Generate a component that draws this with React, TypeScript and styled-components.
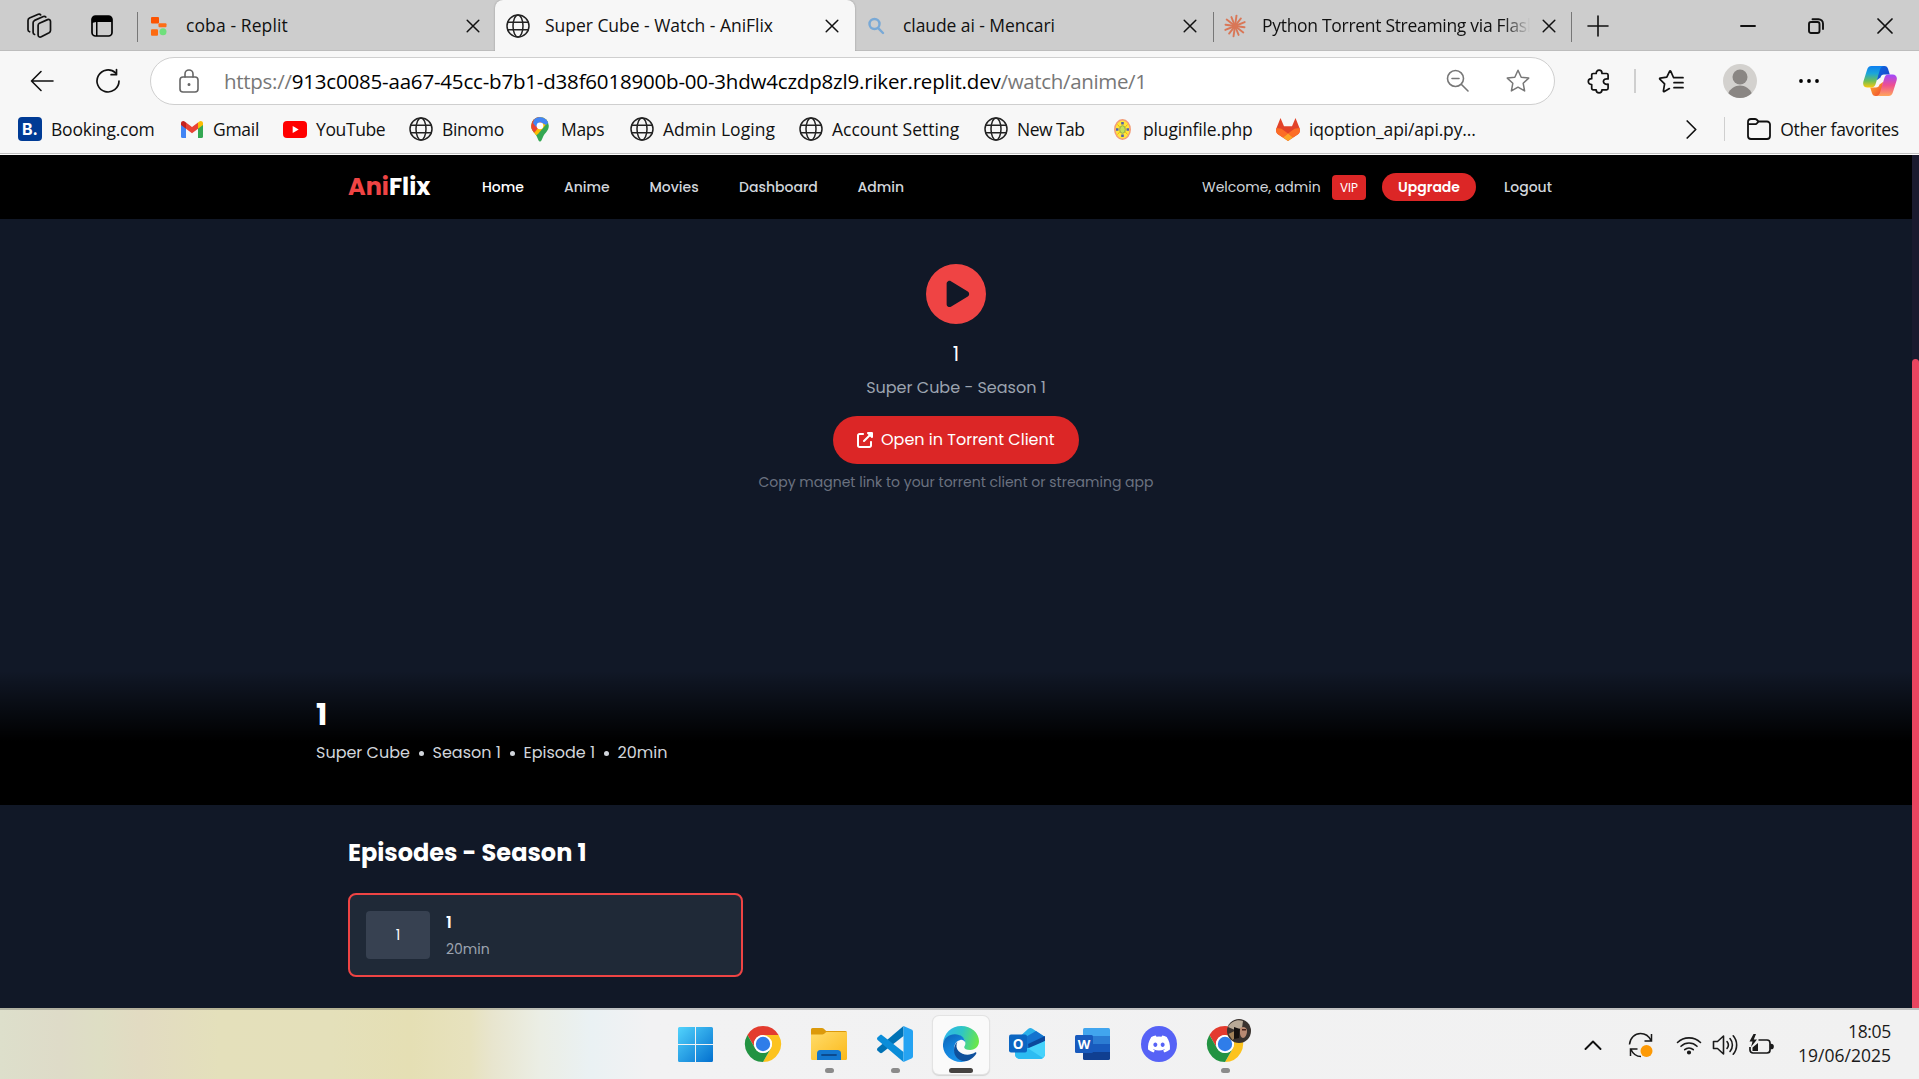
import React from "react";
import styled, { createGlobalStyle, css } from "styled-components";
import { FaCirclePlay, FaUpRightFromSquare, FaDiscord } from "react-icons/fa6";

const UI = `"Segoe UI", "Open Sans", "Noto Sans", sans-serif`;
const WEB = `Poppins, Inter, "Open Sans", sans-serif`;

const Global = createGlobalStyle`
  * { box-sizing: border-box; }
  html, body { margin: 0; padding: 0; }
  body { width: 1919px; height: 1079px; overflow: hidden; background: #111827; }
  svg { display: block; flex: none; }
`;

const Screen = styled.div`
  display: grid;
  grid-template-rows: 51px 104px 853px 71px;
  width: 1919px;
  height: 1079px;
  font-family: ${UI};
  color: #111;
`;

/* ---------- shared ---------- */
const Cell = styled.div<{ $w: number; $ml?: number }>`
  width: ${p => p.$w}px;
  margin-left: ${p => p.$ml ?? 0}px;
  height: 100%;
  display: flex;
  flex: none;
  align-items: center;
  justify-content: center;
`;
const Text = styled.span<{ $ls?: number }>`
  letter-spacing: ${p => p.$ls ?? 0}px;
  white-space: pre;
`;
const Spacer = styled.div`flex: 1;`;

/* ---------- tab strip ---------- */
const TabStrip = styled.div`
  display: flex;
  background: #cdcdcd;
  box-shadow: inset 0 -1px 0 #bdbdbd;
`;
const Lead = styled.div`
  display: flex;
  width: 136px;
  padding-left: 6px;
`;
const Tab = styled.div<{ $w: number; $active?: boolean; $sep?: boolean; $shift?: number }>`
  position: relative;
  display: flex;
  align-items: center;
  width: ${p => p.$w}px;
  flex: none;
  padding: 1px 0 0 ${p => 11 + (p.$shift ?? 0)}px;
  font-size: 17.5px;
  &::before {
    content: "";
    position: absolute;
    left: 1px;
    top: 12px;
    width: 1px;
    height: 30px;
    background: ${p => (p.$sep ? "#777" : "transparent")};
  }
  ${p => p.$active && css`
    background: #f7f7f7;
    border-radius: 8px 8px 0 0;
    box-shadow: 0 0 2px rgba(0, 0, 0, 0.3);
    clip-path: inset(0 -4px 0 -4px);
  `}
`;
const TabIcon = styled.div`
  width: 24px;
  display: flex;
  justify-content: center;
  margin-right: 15px;
`;
const TabTitle = styled.div<{ $fade?: boolean }>`
  width: 268px;
  overflow: hidden;
  white-space: pre;
  line-height: 28px;
  margin: -2px 1px 0 0;
  ${p => p.$fade && css`mask-image: linear-gradient(90deg, #000 90%, transparent 100%);`}
`;
const TabClose = styled.div`
  width: 36px;
  display: flex;
  justify-content: center;
`;
const TabEnd = styled(Tab)`
  padding: 0;
  justify-content: center;
`;

/* ---------- toolbar ---------- */
const Bars = styled.div`
  display: grid;
  grid-template-rows: 58px 44px 2px;
  background: #f7f7f7;
`;
const Toolbar = styled.div`
  display: flex;
  align-items: center;
  padding-top: 2px;
`;
const Address = styled.div`
  width: 1405px;
  height: 48px;
  margin: 0 -1px 0 9px;
  border: 1px solid #cfcfcf;
  border-radius: 24px;
  background: #fff;
  display: flex;
  align-items: center;
  font-size: 20.5px;
  line-height: 30px;
  color: #777;
`;
const Lock = styled.div`width: 73px; padding-left: 28px;`;
const Domain = styled(Text)`color: #000;`;
const Divider = styled.div<{ $ml: number; $w: number }>`
  width: ${p => p.$w}px;
  height: 24px;
  margin-left: ${p => p.$ml}px;
  background: #cfcfcf;
`;
const Bookmarks = styled.div`
  display: flex;
  align-items: center;
  padding: 0 0 4px 18px;
  font-size: 17.5px;
`;
const Bookmark = styled.div<{ $w: number }>`
  width: ${p => p.$w}px;
  flex: none;
  display: flex;
  align-items: center;
  gap: 9px;
`;
const IconBox = styled.div`
  width: 24px;
  height: 24px;
  display: flex;
  align-items: center;
  justify-content: center;
`;
const BookingMark = styled(IconBox)`
  background: #003b95;
  border-radius: 4px;
  color: #fff;
  font: 700 16px/24px Inter, sans-serif;
`;
const BarsEdge = styled.div`
  border-top: 1px solid #c2c2c2;
  background: #fff;
`;

/* ---------- page ---------- */
const Viewport = styled.div`
  display: grid;
  grid-template-columns: 1912px 7px;
  min-height: 0;
  font-family: ${WEB};
`;
const Scrollbar = styled.div`
  background: #1a1a2e;
  padding-top: 204px;
`;
const Thumb = styled.div`
  height: 100%;
  background: #e94560;
  border-radius: 4px 4px 0 0;
`;
const Page = styled.div`
  display: grid;
  grid-template-rows: 64px 586px 203px;
  background: #111827;
`;
const Nav = styled.nav`
  display: flex;
  align-items: center;
  background: #000;
  padding: 0 348px;
  font-size: 14px;
`;
const Logo = styled.div`
  width: 122px;
  font-size: 24px;
  line-height: 32px;
  font-weight: 700;
  color: #fff;
  white-space: nowrap;
`;
const LogoRed = styled.span`color: #ef4444;`;
const NavLink = styled.a<{ $w: number; $on?: boolean }>`
  width: ${p => p.$w}px;
  padding-left: 12px;
  font-weight: 500;
  color: ${p => (p.$on ? "#fff" : "#d1d5db")};
  white-space: nowrap;
`;
const Welcome = styled.span`
  width: 130px;
  color: #d1d5db;
`;
const Vip = styled.span`
  width: 34px;
  height: 25px;
  border-radius: 4px;
  background: #dc2626;
  color: #fff;
  font-size: 12px;
  line-height: 25px;
  text-align: center;
`;
const Upgrade = styled.button`
  width: 94px;
  height: 28px;
  margin: 0 16px;
  padding: 0;
  border: 0;
  border-radius: 14px;
  background: #dc2626;
  color: #fff;
  font: 600 14px/28px ${WEB};
`;
const Hero = styled.section`
  display: flex;
  flex-direction: column;
  justify-content: space-between;
`;
const Player = styled.div`
  display: flex;
  flex-direction: column;
  align-items: center;
  padding-top: 45px;
  color: #ef4444;
`;
const PlayerTitle = styled.div`
  margin-top: 16px;
  font-size: 20px;
  line-height: 28px;
  color: #fff;
`;
const PlayerSub = styled.div`
  margin-top: 8px;
  font-size: 16px;
  line-height: 24px;
  color: #9ca3af;
`;
const OpenButton = styled.button`
  display: flex;
  align-items: center;
  gap: 8px;
  width: 246px;
  height: 48px;
  margin-top: 16px;
  padding: 0 0 0 24px;
  border: 0;
  border-radius: 24px;
  background: #dc2626;
  color: #fff;
  font: 400 16px/24px ${WEB};
  white-space: nowrap;
`;
const PlayerHint = styled.div`
  margin-top: 8px;
  font-size: 14px;
  line-height: 20px;
  color: #6b7280;
`;
const Info = styled.div`
  height: 138px;
  padding: 30px 316px 0;
  background: linear-gradient(to bottom, rgba(0, 0, 0, 0) 4px, #000 74px);
`;
const InfoTitle = styled.h1`
  margin: 0;
  font-size: 30px;
  line-height: 36px;
  font-weight: 700;
  color: #fff;
`;
const Meta = styled.div`
  display: flex;
  margin-top: 8px;
  font-size: 16px;
  line-height: 24px;
  color: #d1d5db;
`;
const MetaItem = styled.span<{ $w: number }>`
  width: ${p => p.$w}px;
  white-space: nowrap;
`;
const Dot = styled.span`
  width: 22px;
  display: flex;
  align-items: center;
  justify-content: center;
  &::after {
    content: "";
    width: 5px;
    height: 5px;
    border-radius: 50%;
    background: #d1d5db;
  }
`;
const Episodes = styled.section`padding: 32px 348px 0;`;
const SectionTitle = styled.h2`
  margin: 0 0 24px;
  font-size: 24px;
  line-height: 32px;
  font-weight: 700;
  color: #fff;
`;
const EpisodeCard = styled.div`
  display: flex;
  align-items: center;
  gap: 16px;
  width: 395px;
  height: 84px;
  padding: 0 16px;
  border: 2px solid #ef4444;
  border-radius: 8px;
  background: #1f2937;
  color: #fff;
`;
const EpisodeThumb = styled.div`
  width: 64px;
  height: 48px;
  border-radius: 4px;
  background: #374151;
  font-size: 14px;
  line-height: 48px;
  text-align: center;
`;
const EpisodeName = styled.div`
  padding-top: 2px;
  font-size: 16px;
  line-height: 26px;
  font-weight: 600;
`;
const EpisodeTime = styled.div`
  font-size: 14px;
  line-height: 26px;
  color: #9ca3af;
`;

/* ---------- taskbar ---------- */
const Taskbar = styled.div`
  display: flex;
  border-top: 2px solid rgba(0, 0, 0, 0.2);
  background: linear-gradient(90deg, #dddfcb 0, #dedbc8 60px, #dedec4 100px, #e2dbc2 140px, #e4e0bb 220px, #e4e0ba 330px, #e5dfb4 410px, #e7e2be 470px, #e8e5ce 492px, #ebeee5 540px, #eaf1f3 590px, #f2f2f3 650px, #f1f1f1 100%) border-box;
`;
const Apps = styled.div`
  display: flex;
  gap: 10px;
  padding: 6px 0 0 667px;
`;
const AppButton = styled.div<{ $active?: boolean }>`
  width: 56px;
  height: 58px;
  display: grid;
  grid-template-rows: 36px 5px;
  row-gap: 6px;
  padding-top: 10px;
  justify-items: center;
  border-radius: 6px;
  &:first-child { margin-right: 2px; }
  ${p => p.$active && css`background: #fafafa; box-shadow: 0 0 0 1px #e3e3e3, 0 1px 1px 1px #d4d4d4;`}
`;
const AppIcon = styled.div`
  height: 36px;
  display: flex;
  align-items: center;
`;
const Indicator = styled.div<{ $w: number }>`
  width: ${p => p.$w}px;
  height: 5px;
  border-radius: 3px;
  background: ${p => (p.$w > 10 ? "#454341" : "#8b8b8b")};
`;
const Tray = styled.div`
  display: flex;
  align-items: center;
  padding-right: 28px;
`;
const Clock = styled.div`
  width: 106px;
  margin-top: -4px;
  text-align: right;
  font-size: 17.5px;
  line-height: 24px;
  color: #1a1a1a;
`;

/* ---------- icons ---------- */
type S = { w?: number; h?: number; vb?: string; c?: string; sw?: number; children: React.ReactNode };
const Line = ({ w = 24, h, vb, c = "#111", sw = 1.6, children }: S) => (
  <svg width={w} height={h ?? w} viewBox={vb ?? `0 0 ${w} ${h ?? w}`} fill="none" stroke={c} strokeWidth={sw} strokeLinecap="round" strokeLinejoin="round">{children}</svg>
);
const Globe = () => (
  <Line sw={1.5} c="#222"><circle cx="12" cy="12" r="11" /><ellipse cx="12" cy="12" rx="5" ry="11" /><path d="M1.8 8.2h20.4M1.8 15.8h20.4" /></Line>
);
const Cross = () => <Line w={14} sw={1.5}><path d="M1.2 1.2l11.6 11.6M12.8 1.2L1.2 12.8" /></Line>;
const Workspaces = () => (
  <Line w={26} h={26} sw={1.7}>
    <path d="M13.4 10.2l8.2-3.6c1.5-.6 2.9.2 2.9 1.8v9.2c0 1-.5 1.7-1.4 2.2l-7.8 4c-1.6.8-3.2 0-3.2-1.8v-9.6c0-1 .4-1.8 1.3-2.200z" />
    <path d="M8.600 21.500c-1-.3-1.500-1-1.500-2.100V9.800c0-1.200.5-1.900 1.500-2.400l8.800-3.900c1-.4 1.900-.1 2.400.6" />
    <path d="M3.600 18.800c-1-.3-1.600-1-1.600-2.100V7.400c0-1.200.5-1.900 1.500-2.400l8.800-3.700c1-.4 1.900-.1 2.400.6" />
  </Line>
);
const VerticalTabs = () => (
  <svg width="22" height="22" viewBox="0 0 22 22"><rect x="1" y="1" width="20" height="20" rx="3.500" fill="none" stroke="#000" strokeWidth="1.700" /><path d="M1 8V4.500A3.500 3.500 0 0 1 4.500 1h13A3.500 3.500 0 0 1 21 4.500V7H6.500v14H5V7z" fill="#000" /></svg>
);
const Replit = () => (
  <svg width="16" height="19" viewBox="0 0 16 19"><rect width="8" height="6.500" rx="1" fill="#fd5402" /><rect x="7.500" y="6.200" width="8" height="4" rx="1" fill="#fd6d16" /><rect y="12.200" width="7" height="6.500" rx="1" fill="#fd6a10" /><circle cx="12" cy="14.800" r="3.500" fill="#6fe07c" /></svg>
);
const Burst = () => (
  <Line w={24} c="#d97757" sw={1.9}>
    {Array.from({ length: 12 }, (_, i) => {
      const a = (i * 30 + 8) * Math.PI / 180, r = i % 2 ? 10.5 : 9.6;
      return <path key={i} d={`M12 12L${(12 + r * Math.cos(a)).toFixed(1)} ${(12 + r * Math.sin(a)).toFixed(1)}`} />;
    })}
  </Line>
);
const Star = ({ c = "#777" }: { c?: string }) => (
  <Line w={26} c={c} sw={1.5}><path d="M13 2.200l3.200 7 7.500.9-5.500 5.200 1.400 7.600L13 19.200l-6.600 3.700 1.400-7.600-5.500-5.200 7.500-.9z" /></Line>
);
const FavList = () => (
  <Line w={26} h={26} sw={1.7}><path d="M15.500 9.500l-2.800-6.300c-.3-.5-.8-.5-1 0L8.800 9.200l-6.600.9c-.6.1-.8.6-.4 1l4.800 4.800-1.200 6.900c-.1.7.4 1 1 .7l5-2.900M16 9.700h9M16 14.700h9M16 19.700h9" /></Line>
);
const Puzzle = () => (
  <Line w={24} h={25} sw={1.7}><path d="M8 4.500h1.200c0-2 1.200-3.300 2.900-3.300s2.900 1.300 2.900 3.300h4.500c1 0 1.600.6 1.600 1.600V10c-2.600-.5-4.700.6-4.700 2.600s2.100 3.100 4.700 2.600v4.100c0 1-.6 1.600-1.600 1.600h-4.600c0 1.800-1.100 2.900-2.800 2.900s-2.900-1.100-2.900-2.900H6.300c-1 0-1.600-.6-1.600-1.600v-3.800c-2.200 0-3.400-1.200-3.400-2.900s1.200-2.900 3.400-2.900V6.100c0-1 .6-1.600 1.600-1.600z" /></Line>
);
const Avatar = () => (
  <svg width="34" height="34" viewBox="0 0 34 34"><defs><clipPath id="av"><circle cx="17" cy="17" r="17" /></clipPath></defs><g clipPath="url(#av)"><rect width="34" height="34" fill="#d3d1ce" /><circle cx="17" cy="13" r="7.500" fill="#8a8683" /><path d="M5 30c2-5.500 7-8.500 12-8.500S27 24.500 29 30l-5 5H10z" fill="#8a8683" /></g></svg>
);
const Copilot = () => (
  <svg width="34" height="30" viewBox="0 0 34 30">
    <defs>
      <linearGradient id="cp1" x1="0" y1="0" x2="0" y2="1"><stop offset="0" stopColor="#0d7ff2" /><stop offset=".35" stopColor="#1ba6d8" /><stop offset=".7" stopColor="#6fbf56" /><stop offset="1" stopColor="#fdc90b" /></linearGradient>
      <linearGradient id="cp2" x1="0" y1="0" x2="0" y2="1"><stop offset="0" stopColor="#a048ff" /><stop offset=".5" stopColor="#ee4f91" /><stop offset="1" stopColor="#ffa65b" /></linearGradient>
      <linearGradient id="cp3" x1="0" y1="0" x2="1" y2="1"><stop offset="0" stopColor="#0a6be0" /><stop offset="1" stopColor="#1f3fc8" /></linearGradient>
      <linearGradient id="cp4" x1="0" y1="0" x2="1" y2="1"><stop offset="0" stopColor="#ffb02e" /><stop offset="1" stopColor="#ee4531" /></linearGradient>
    </defs>
    <path d="M15 0h6.500c2 0 3 1.200 3.500 2.800L26.800 8.500H21c-2 0-3 1-3.500 3L14 14z" fill="url(#cp3)" />
    <path d="M19 30h-6.500c-2 0-3-1.200-3.500-2.800L7.200 21.500H13c2 0 3-1 3.500-3L20 16z" fill="url(#cp4)" />
    <path d="M8.500 0h12c-2 .3-3 1.800-3.600 3.800l-4.200 14c-.8 2.600-2 3.700-4.500 3.700H4.500C1 21.500-.5 19 .4 15.500L4 4C4.800 1.300 6 0 8.500 0z" fill="url(#cp1)" />
    <path d="M25.500 30h-12c2-.3 3-1.800 3.600-3.800l4.200-14c.8-2.600 2-3.700 4.500-3.700h3.700c3.500 0 5 2.500 4.100 6L30 26c-.8 2.700-2 4-4.500 4z" fill="url(#cp2)" />
  </svg>
);
const Gmail = () => (
  <svg width="22" height="17" viewBox="0 0 22 17"><path d="M0 3v12.500A1.500 1.500 0 0 0 1.500 17H5V7z" fill="#4285f4" /><path d="M22 3v12.500a1.500 1.500 0 0 1-1.500 1.500H17V7z" fill="#34a853" /><path d="M5 1.500v6.200l6 4.500 6-4.500V1.500L11 6z" fill="#ea4335" /><path d="M17 1.500v6.200l5-3.700V2.300C22 .2 19.600-.6 18 .7z" fill="#fbbc04" /><path d="M5 1.500v6.200L0 4V2.300C0 .2 2.400-.6 4 .7z" fill="#c5221f" /></svg>
);
const YouTube = () => (
  <svg width="24" height="17" viewBox="0 0 24 17"><rect width="24" height="17" rx="4" fill="#f00" /><path d="M9.700 4.900v7.200l6-3.600z" fill="#fff" /></svg>
);
const Maps = () => (
  <svg width="18" height="25" viewBox="0 0 18 25">
    <defs><clipPath id="pin"><path d="M9 0a8.800 8.800 0 0 1 8.800 8.800c0 5-3.600 6.800-5.600 10.600C10.800 22 10.600 24.500 9 24.500S7.200 22 5.800 19.400C3.800 15.600.2 13.800.2 8.800A8.800 8.800 0 0 1 9 0z" /></clipPath></defs>
    <g clipPath="url(#pin)"><rect width="18" height="25" fill="#34a853" /><path d="M0 0h18v4L7 17 0 22z" fill="#fbbc04" /><path d="M0 0h8l5 4-10 12-3-2z" fill="#ea4335" /><path d="M4 0h14v5l-3 3-6-3-4 5-3-4z" fill="#4285f4" /></g><circle cx="9" cy="8.800" r="3.400" fill="#fff" />
  </svg>
);
const Plugin = () => (
  <svg width="17" height="21" viewBox="0 0 17 21"><ellipse cx="8.500" cy="10.500" rx="7.700" ry="9.700" fill="#ffe53c" stroke="#f29a76" strokeWidth="1.500" /><path d="M3.500 5.500l3 3.500M13.500 5.500l-3 3.500M3.500 15.500l3-3.500M13.500 15.500l-3-3.500" stroke="#f4b400" fill="none" /><ellipse cx="8.500" cy="10.500" rx="2.800" ry="3.800" fill="#c4e05a" stroke="#93ad48" /><path d="M7.200 3h2.600v2.500H7.200zM7.200 15.500h2.600V18H7.200zM2 9.300h2.500v2.500H2zM12.500 9.300H15v2.500h-2.500z" fill="#5560a8" /></svg>
);
const Gitlab = () => (
  <svg width="24" height="23" viewBox="0 0 24 23"><path d="M4.500 0L8 8.300h8L19.500 0l4 10c1 2.600.2 5-1.800 6.600L12 23l-9.700-6.400C.3 15-.5 12.600.5 10z" fill="#e24329" /><path d="M23.500 10l-5 .8L12 15.500l5 3.900 4.700-2.800c2-1.600 2.800-4 1.800-6.600zM.5 10l5 .8 6.500 4.700-5 3.900-4.700-2.800C.3 15-.5 12.600.5 10z" fill="#fc6d26" /><path d="M12 15.500l5 3.900L12 23l-5-3.600z" fill="#fca326" /></svg>
);
const Windows = () => (
  <svg width="35" height="35" viewBox="0 0 35 35"><defs><linearGradient id="wn" x1="0" y1="0" x2="1" y2="1" ><stop offset="0" stopColor="#52d3fc" /><stop offset="1" stopColor="#0370cf" /></linearGradient></defs><path d="M1.500 0H17v17H0V1.500A1.500 1.500 0 0 1 1.500 0zM18 0h15.500A1.500 1.500 0 0 1 35 1.500V17H18zM0 18h17v17H1.500A1.500 1.500 0 0 1 0 33.500zM18 18h17v15.500a1.500 1.500 0 0 1-1.500 1.500H18z" fill="url(#wn)" /></svg>
);
const Chrome = ({ photo }: { photo?: boolean }) => (
  <svg width="36" height="36" viewBox="0 0 36 36" overflow="visible">
    <path d="M2.400 9A18 18 0 0 1 33.600 9H18a9 9 0 0 0-7.800 13.500z" fill="#e33b2e" />
    <path d="M33.600 9A18 18 0 0 1 18 36l7.800-13.500A9 9 0 0 0 25.800 13.500L18 9z" fill="#fcc31e" />
    <path d="M2.400 9l7.800 13.500A9 9 0 0 0 25.800 22.500L18 36A18 18 0 0 1 2.400 9z" fill="#229342" />
    <circle cx="18" cy="18" r="9" fill="#fff" /><circle cx="18" cy="18" r="7.200" fill="#2f7de9" />
    {photo && <g><circle cx="32" cy="5" r="12" fill="#3a332f" /><path d="M21 1c3-6 10-8 15-6l-1 7-7 2z" fill="#b9aa97" /><path d="M33 2c3-2 7-1 7 3s-2 7-4 7-4-4-3-10z" fill="#b98a72" /><path d="M21.500 8l6-3 2 6-4 3z" fill="#a3835a" /><path d="M27 1l6 2-1 9-5 1z" fill="#15110f" /><path d="M35 3h4v1.500h-4z" fill="#4a241c" /></g>}
  </svg>
);
const Explorer = () => (
  <svg width="36" height="32" viewBox="0 0 36 32"><defs><linearGradient id="fo" x1="0" y1="0" x2="1" y2="1"><stop offset="0" stopColor="#ffdc6b" /><stop offset="1" stopColor="#fbb91a" /></linearGradient></defs><path d="M0 1.500A1.500 1.500 0 0 1 1.500 0h9.300c1 0 1.700.4 2.300 1l2 2H34.500A1.500 1.500 0 0 1 36 4.500V10H0z" fill="#dc9a0b" /><path d="M0 6.500h10.500c1.300 0 2.200-.4 3-1.100l1.700-1.400H36v26.500a1.500 1.500 0 0 1-1.500 1.500h-33A1.500 1.500 0 0 1 0 30.500z" fill="url(#fo)" /><path d="M6 32v-6.500A3.500 3.500 0 0 1 9.500 22h17a3.500 3.500 0 0 1 3.500 3.500V32z" fill="#1377cf" /><path d="M11 27h14" stroke="#0b4a8e" strokeWidth="1.800" strokeLinecap="round" /></svg>
);
const VSCode = () => (
  <svg width="36" height="36" viewBox="0 0 36 36"><path d="M26.500 0v10L5.200 26.800c-.8.600-1.600.6-2.300 0L.6 24.700c-.8-.8-.8-1.800 0-2.600z" fill="#0072b5" /><path d="M26.500 36V26L5.200 9.200c-.8-.6-1.600-.6-2.300 0L.6 11.300c-.8.8-.8 1.800 0 2.600z" fill="#0a8dd9" /><path d="M26.500 0l8 3.600c1 .4 1.500 1.200 1.500 2.200v24.400c0 1-.5 1.800-1.500 2.200l-8 3.600z" fill="#25a3f2" /></svg>
);
const Edge = () => (
  <svg width="36" height="36" viewBox="0 0 36 36">
    <defs>
      <linearGradient id="e1" x1="0" y1=".3" x2="1" y2=".5"><stop offset="0" stopColor="#2fb5ee" /><stop offset=".5" stopColor="#2fc6c4" /><stop offset="1" stopColor="#6ae749" /></linearGradient>
      <linearGradient id="e2" x1="0" y1="0" x2=".5" y2="1"><stop offset="0" stopColor="#0d62b5" /><stop offset=".5" stopColor="#1180d8" /><stop offset="1" stopColor="#1a91e8" /></linearGradient>
    </defs>
    <path d="M0 17C1 7 8.500 0 18.200 0 28.500 0 36 7 36 15.300c0 5-3.800 8.700-8.800 8.700-4 0-6-1.300-6-2.800 0-1 1.200-1.500 1.200-4C22.400 12.500 18 9.500 13 9 7 8.500 2 12 0 17z" fill="url(#e1)" />
    <path d="M0 18C1 12 6 8.200 12 8.300c5.500.1 10 3.400 10.300 8.200-1-2-3-3-5-2.600-4 .8-6.500 4.500-6 9.600.5 6 5 11 11 11.500C20.700 35.800 19 36 18 36 7.500 36-.8 27.500 0 18z" fill="url(#e2)" />
    <path d="M14.500 15.500c-1.700 3.500-1.300 7 1 9.500 3.600 4 11 5 16.500 1.500.9-.5 1.800.3 1.200 1.200-2.500 4-6.700 7-11 7.500-6.500.2-11.200-5-11.200-11 0-3.800 1.300-6.800 3.500-8.700z" fill="#0f509c" />
  </svg>
);
const Outlook = () => (
  <svg width="36" height="32" viewBox="0 0 36 32"><path d="M6 13L19 1c1.500-1.200 3-1.200 4.500-.2L34.500 8c1 .7 1.500 1.600 1.500 3v15a5 5 0 0 1-5 5H11a5 5 0 0 1-5-5z" fill="#2bb0ea" /><path d="M8 14L27 3l9 6v2L20 21z" fill="#1473cf" /><path d="M19 16l17-8v5L20 22z" fill="#0b479b" /><path d="M6 26l30-13v13a5 5 0 0 1-5 5H11a5 5 0 0 1-5-5z" fill="#46d2fb" /><path d="M6 22l14-1 14 9c-1 .7-2 1-3 1H11a5 5 0 0 1-5-5z" fill="#2cbcf2" /><rect y="6.500" width="18" height="18" rx="2" fill="#0c66c2" /><text x="9" y="20.500" textAnchor="middle" fontFamily="Open Sans" fontWeight="700" fontSize="13.500" fill="#fff">O</text></svg>
);
const Word = () => (
  <svg width="36" height="32" viewBox="0 0 36 32"><path d="M8 1.500A1.500 1.500 0 0 1 9.500 0h24A1.500 1.500 0 0 1 35 1.500V8H8z" fill="#41a5ee" /><path d="M8 8h27v8H8z" fill="#2b7cd3" /><path d="M8 16h27v8H8z" fill="#185abd" /><path d="M8 24h27v6.500a1.500 1.500 0 0 1-1.500 1.500h-24A1.500 1.500 0 0 1 8 30.500z" fill="#103f91" /><rect y="7" width="18" height="18" rx="1.500" fill="#185abd" /><text x="9" y="20.800" textAnchor="middle" fontFamily="Open Sans" fontWeight="700" fontSize="13" fill="#fff">W</text></svg>
);
const DiscordDisc = styled.div`
  width: 36px;
  height: 36px;
  border-radius: 50%;
  background: #5662f6;
  color: #fff;
  display: flex;
  align-items: center;
  justify-content: center;
`;

const bookmarks: [React.ReactNode, string, number, number][] = [
  [<BookingMark>B.</BookingMark>, "Booking.com", 162, -0.22],
  [<Gmail />, "Gmail", 103, -0.28],
  [<YouTube />, "YouTube", 126, -0.38],
  [<Globe />, "Binomo", 119, -0.3],
  [<Maps />, "Maps", 102, -0.3],
  [<Globe />, "Admin Loging", 169, 0.04],
  [<Globe />, "Account Setting", 185, 0],
  [<Globe />, "New Tab", 126, -0.53],
  [<Plugin />, "pluginfile.php", 166, -0.16],
  [<Gitlab />, "iqoption_api/api.py...", 382, -0.15],
];

const apps: { icon: React.ReactNode; active?: boolean; mark?: number }[] = [
  { icon: <Windows /> },
  { icon: <Chrome /> },
  { icon: <Explorer />, mark: 9 },
  { icon: <VSCode />, mark: 9 },
  { icon: <Edge />, mark: 24, active: true },
  { icon: <Outlook /> },
  { icon: <Word /> },
  { icon: <DiscordDisc><FaDiscord size={24} /></DiscordDisc> },
  { icon: <Chrome photo />, mark: 9 },
];

export default function App() {
  return (
    <>
      <Global />
      <Screen>
        <TabStrip>
          <Lead>
            <Cell $w={66}><Workspaces /></Cell>
            <Cell $w={60}><VerticalTabs /></Cell>
          </Lead>
          <Tab $w={359} $sep>
            <TabIcon><Replit /></TabIcon>
            <TabTitle><Text $ls={0.1}>coba - Replit</Text></TabTitle>
            <TabClose><Cross /></TabClose>
          </Tab>
          <Tab $w={360} $active>
            <TabIcon><Globe /></TabIcon>
            <TabTitle><Text $ls={-0.03}>Super Cube - Watch - AniFlix</Text></TabTitle>
            <TabClose><Cross /></TabClose>
          </Tab>
          <Tab $w={357} $shift={-2}>
            <TabIcon><Line w={18} c="#79a9d6" sw={2.4}><circle cx="7.500" cy="7" r="5" /><path d="M11.200 11.200l4.800 4.800" /></Line></TabIcon>
            <TabTitle><Text $ls={-0.07}>claude ai - Mencari</Text></TabTitle>
            <TabClose><Cross /></TabClose>
          </Tab>
          <Tab $w={358} $sep>
            <TabIcon><Burst /></TabIcon>
            <TabTitle $fade><Text $ls={-0.3}>Python Torrent Streaming via Flask</Text></TabTitle>
            <TabClose><Cross /></TabClose>
          </Tab>
          <TabEnd $w={55} $sep><Line w={22}><path d="M1 11h20M11 1v20" /></Line></TabEnd>
          <Spacer />
          <Cell $w={69}><Line w={16} sw={1.9}><path d="M1 8h14" /></Line></Cell>
          <Cell $w={68}><Line w={16} sw={1.9}><rect x="1" y="4" width="10.500" height="11" rx="2" /><path d="M4.500 1.200h6a4.500 4.500 0 0 1 4.500 4.500v5.300" /></Line></Cell>
          <Cell $w={69}><Line w={16} sw={1.7}><path d="M1 1l14 14M15 1L1 15" /></Line></Cell>
        </TabStrip>

        <Bars>
          <Toolbar>
            <Cell $w={66} $ml={9}><Line w={24} h={22}><path d="M23 11H1.500M11 1.500L1.500 11l9.500 9.500" /></Line></Cell>
            <Cell $w={66}><Line w={26} h={26} sw={1.7}><path d="M24 13a11 11 0 1 1-3.400-8M21.500 1.500v5.200h-5.400" /></Line></Cell>
            <Address>
              <Lock><Line w={20} h={24} c="#666"><rect x="1" y="8" width="18" height="15" rx="3" /><path d="M6 8V5a4 4 0 0 1 8 0v3" /><circle cx="10" cy="15.500" r="0.700" fill="#666" /></Line></Lock>
              <Text $ls={-0.28}>https://</Text><Domain $ls={-0.19}>913c0085-aa67-45cc-b7b1-d38f6018900b-00-3hdw4czdp8zl9.riker.replit.dev</Domain><Text $ls={-0.34}>/watch/anime/1</Text>
              <Spacer />
              <Cell $w={60}><Line w={24} c="#777"><circle cx="9.500" cy="9.500" r="8" /><path d="M15.500 15.500l6.500 6.500M6 9.500h7" /></Line></Cell>
              <Cell $w={60}><Star /></Cell>
              <Cell $w={6}><span /></Cell>
            </Address>
            <Cell $w={66} $ml={12}><Puzzle /></Cell>
            <Divider $w={2} $ml={2} />
            <Cell $w={66} $ml={2}><FavList /></Cell>
            <Cell $w={72}><Avatar /></Cell>
            <Cell $w={66}><svg width="20" height="4"><circle cx="2" cy="2" r="1.900" /><circle cx="10" cy="2" r="1.900" /><circle cx="18" cy="2" r="1.900" /></svg></Cell>
            <Cell $w={76}><Copilot /></Cell>
          </Toolbar>
          <Bookmarks>
            {bookmarks.map(([icon, label, w, ls]) => (
              <Bookmark key={label} $w={w}><IconBox>{icon}</IconBox><Text $ls={ls}>{label}</Text></Bookmark>
            ))}
            <Cell $w={66}><Line w={11} h={19} sw={1.700}><path d="M1.200 1l8.500 8.500L1.200 18" /></Line></Cell>
            <Divider $w={1} $ml={0} />
            <Cell $w={24} $ml={22}><Line w={24} h={22} sw={1.800}><path d="M1 5.500V18a3 3 0 0 0 3 3h16a3 3 0 0 0 3-3V6.500a3 3 0 0 0-3-3h-8.500L9.500 1.500C9 1.100 8.600 1 8 1H4a3 3 0 0 0-3 3zM1.200 6.200H8c.7 0 1.200-.2 1.600-.6l2-2" /></Line></Cell>
            <Cell $w={127} $ml={5}><Text $ls={-0.3}>Other favorites</Text></Cell>
          </Bookmarks>
          <BarsEdge />
        </Bars>

        <Viewport>
          <Page>
            <Nav>
              <Logo><LogoRed>Ani</LogoRed>Flix</Logo>
              <NavLink $w={82} $on>Home</NavLink>
              <NavLink $w={85.5}>Anime</NavLink>
              <NavLink $w={89.5}>Movies</NavLink>
              <NavLink $w={118.5}>Dashboard</NavLink>
              <NavLink $w={60}>Admin</NavLink>
              <Spacer />
              <Welcome>Welcome, admin</Welcome>
              <Vip>VIP</Vip>
              <Upgrade>Upgrade</Upgrade>
              <NavLink $w={72}>Logout</NavLink>
            </Nav>
            <Hero>
              <Player>
                <FaCirclePlay size={60} />
                <PlayerTitle>1</PlayerTitle>
                <PlayerSub>Super Cube - Season 1</PlayerSub>
                <OpenButton><FaUpRightFromSquare size={16} />Open in Torrent Client</OpenButton>
                <PlayerHint>Copy magnet link to your torrent client or streaming app</PlayerHint>
              </Player>
              <Info>
                <InfoTitle>1</InfoTitle>
                <Meta>
                  <MetaItem $w={94.5}>Super Cube</MetaItem><Dot />
                  <MetaItem $w={69}>Season 1</MetaItem><Dot />
                  <MetaItem $w={72}>Episode 1</MetaItem><Dot />
                  <MetaItem $w={50}>20min</MetaItem>
                </Meta>
              </Info>
            </Hero>
            <Episodes>
              <SectionTitle>Episodes - Season 1</SectionTitle>
              <EpisodeCard>
                <EpisodeThumb>1</EpisodeThumb>
                <div>
                  <EpisodeName>1</EpisodeName>
                  <EpisodeTime>20min</EpisodeTime>
                </div>
              </EpisodeCard>
            </Episodes>
          </Page>
          <Scrollbar><Thumb /></Scrollbar>
        </Viewport>

        <Taskbar>
          <Apps>
            {apps.map((a, i) => (
              <AppButton key={i} $active={a.active}><AppIcon>{a.icon}</AppIcon>{a.mark && <Indicator $w={a.mark} />}</AppButton>
            ))}
          </Apps>
          <Spacer />
          <Tray>
            <Cell $w={48}><Line w={18} h={10} sw={1.900}><path d="M1.500 9L9 1.500 16.500 9" /></Line></Cell>
            <Cell $w={48}><svg width="26" height="26" viewBox="0 0 26 26" fill="none" stroke="#1a1a1a" strokeWidth="1.500"><path d="M1.500 12.500C2 6 7 1.500 12.500 1.500c4.500 0 8.500 2.700 10.500 7M23.500 2v7h-7M2.500 24v-7h7M3 17.500c2 4.500 5.500 7 10 7" /><circle cx="18.500" cy="19" r="6" fill="#fd9a06" stroke="none" /></svg></Cell>
            <Cell $w={48}><Line w={26} h={20} sw={1.600} c="#1a1a1a"><path d="M1.500 7.500a16.500 16.500 0 0 1 23 0M5 11.300a11.500 11.500 0 0 1 16 0M8.700 14.700a6.500 6.500 0 0 1 8.600 0" /><circle cx="13" cy="17.500" r="1.300" fill="#1a1a1a" /></Line></Cell>
            <Cell $w={24}><Line w={26} h={22} sw={1.600} c="#1a1a1a"><path d="M1.500 7.500h4L11.500 2v18l-6-5.500h-4zM15 7.500c1.600 2 1.600 5 0 7M18 4.500c3.200 3.700 3.200 9.300 0 13M21.200 1.800c4.600 5.300 4.600 13.100 0 18.400" /></Line></Cell>
            <Cell $w={48}><svg width="26" height="22" viewBox="0 0 26 22" fill="none" stroke="#1a1a1a" strokeWidth="1.700"><path d="M10.500 6H19a3 3 0 0 1 3 3v7a3 3 0 0 1-3 3H5a3 3 0 0 1-3-3v-3" /><path d="M23 10.500c1.300 0 2 .7 2 2s-.7 2-2 2z" fill="#1a1a1a" /><path d="M4.500 17v-3.500L10 9v8z" fill="#1a1a1a" stroke="none" /><path d="M5.500 0L1.500 7.500h3L3 13l6-7.500H5.800L8 0z" fill="#1a1a1a" stroke="none" /></svg></Cell>
            <Clock><Text $ls={-0.32}>18:05</Text><br /><Text>19/06/2025</Text></Clock>
          </Tray>
        </Taskbar>
      </Screen>
    </>
  );
}
